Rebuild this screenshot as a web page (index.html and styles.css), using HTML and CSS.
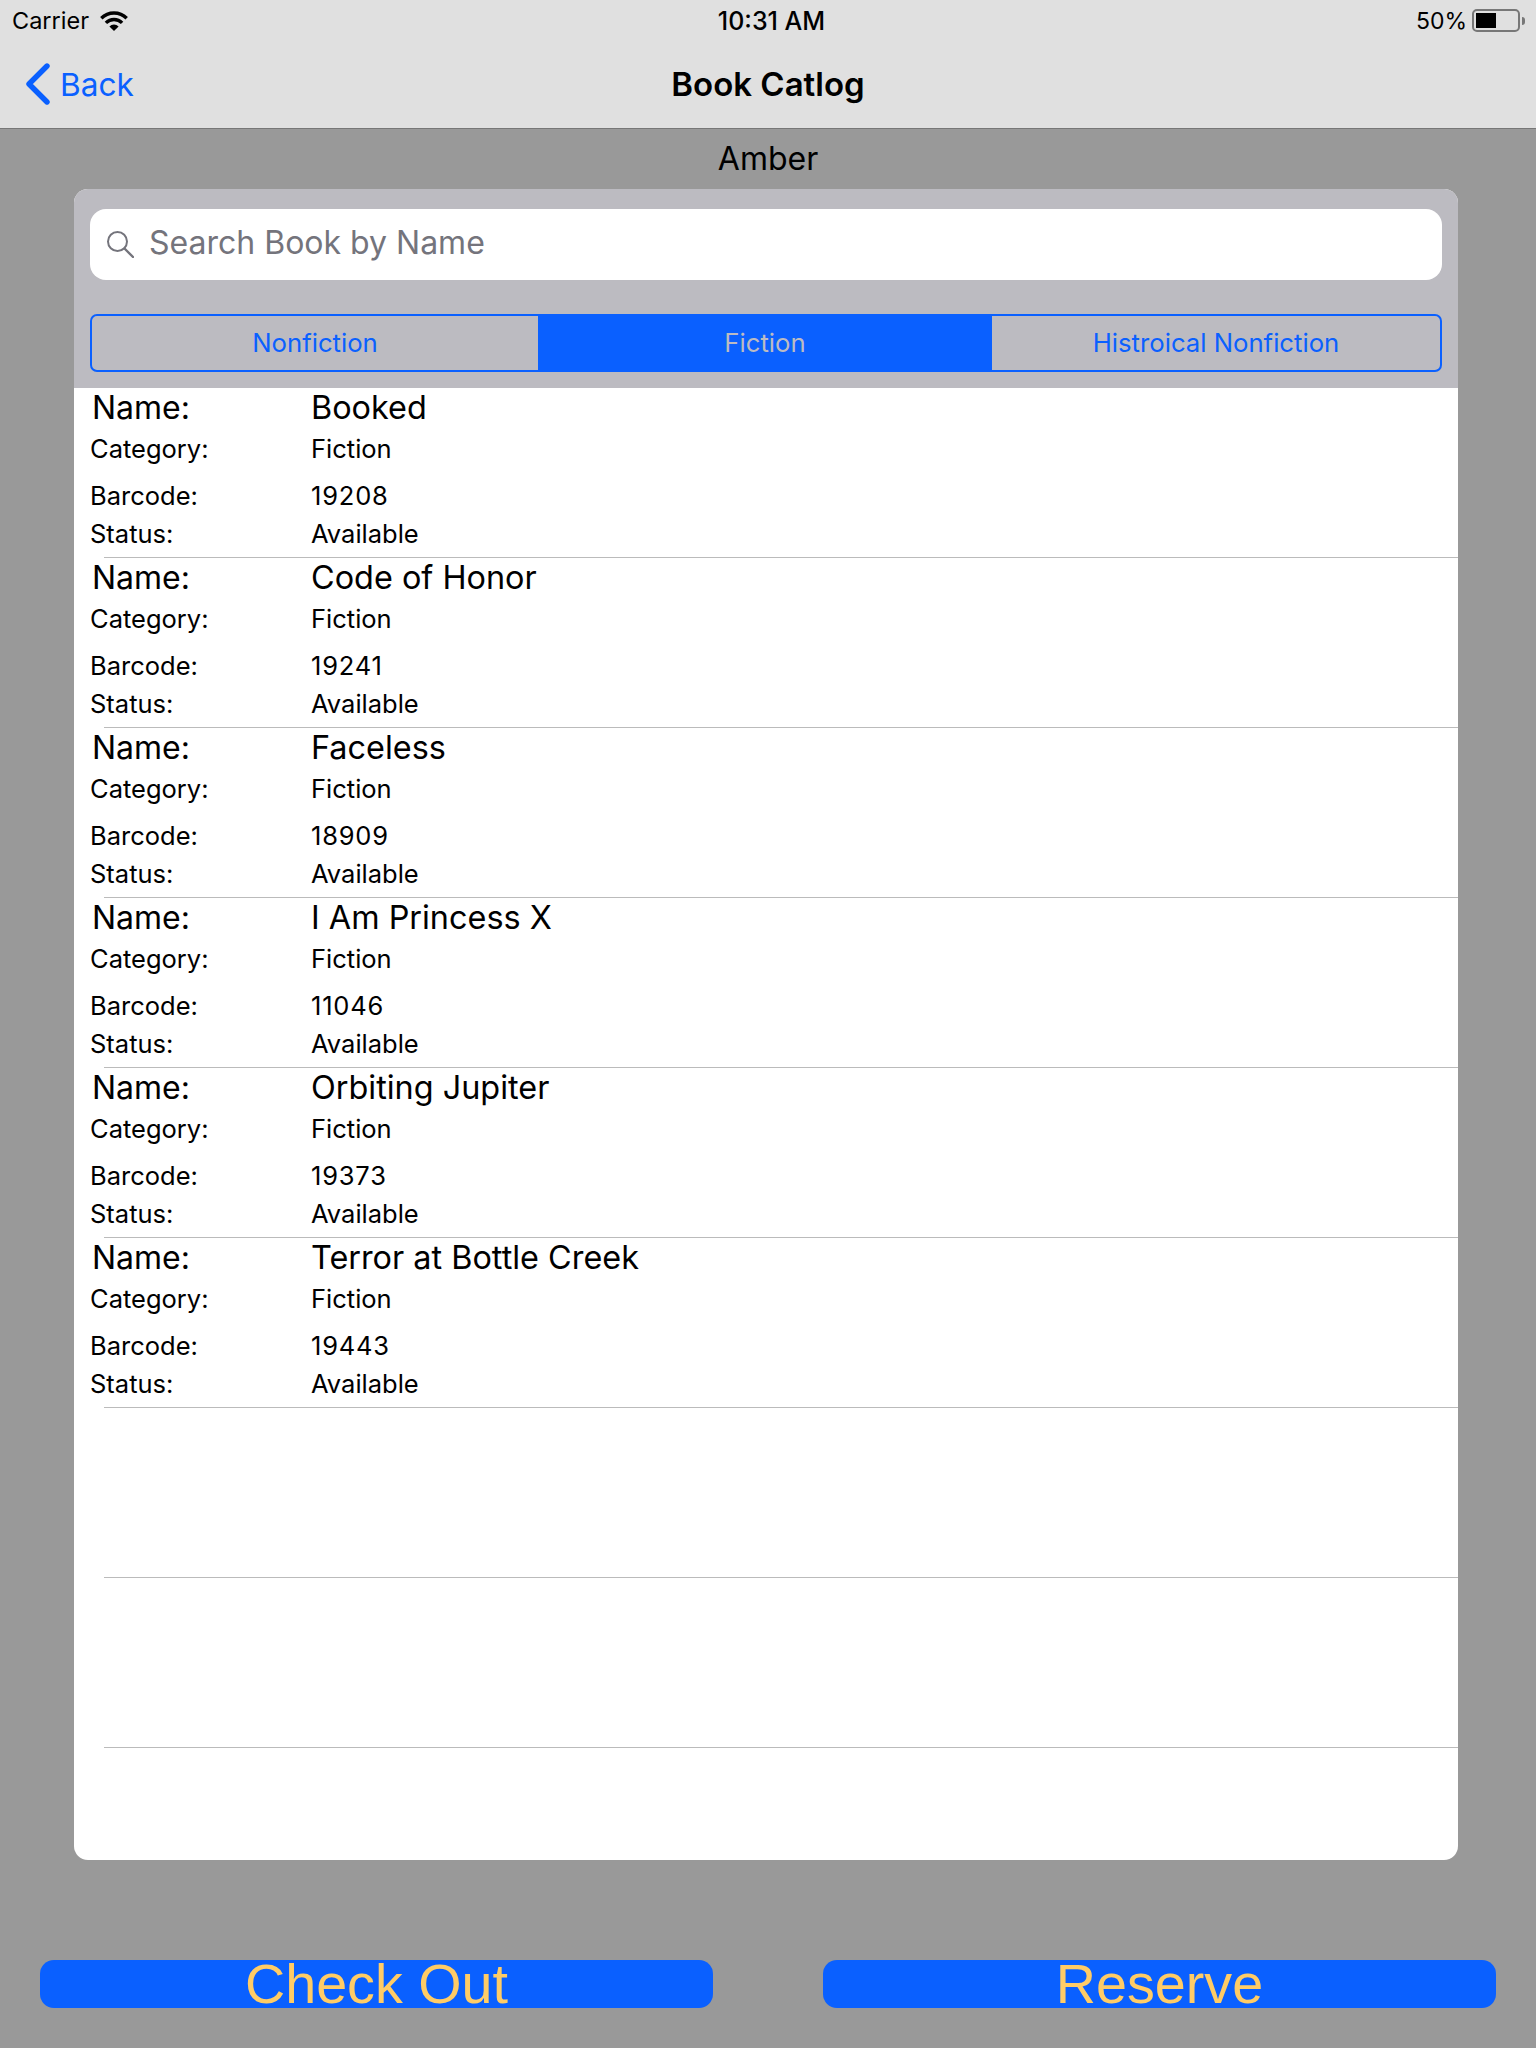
FILE: index.html
```html
<!DOCTYPE html>
<html lang="en">
<head>
    <meta charset="UTF-8">
    <title>Book Catlog</title>
    <link rel="stylesheet" href="styles.css">
</head>
<body>

    <header class="top">
        <div class="status">
            <div class="status-left">
                <span>Carrier</span>
                <svg class="wifi" width="28" height="20" viewBox="0 0 28 20">
                    <path d="M1.3 7.3 A18 18 0 0 1 26.7 7.3" fill="none" stroke="#000" stroke-width="3.4"/>
                    <path d="M5.9 11.9 A11.5 11.5 0 0 1 22.1 11.9" fill="none" stroke="#000" stroke-width="3.4"/>
                    <path d="M14 20 L9.4 15.4 A6.5 6.5 0 0 1 18.6 15.4 Z"/>
                </svg>
            </div>
            <div class="status-time">10:31 AM</div>
            <div class="status-right">
                <span>50%</span>
                <div class="battery"><div class="battery-fill"></div></div>
                <div class="battery-nub"></div>
            </div>
        </div>
        <nav class="nav">
            <a class="back">
                <svg width="24" height="42" viewBox="0 0 24 42">
                    <path d="M21 3 L3 21 L21 39" fill="none" stroke="#0a60ff" stroke-width="5.4" stroke-linecap="round" stroke-linejoin="round"/>
                </svg>
                <span>Back</span>
            </a>
            <div class="nav-title">Book Catlog</div>
        </nav>
    </header>

    <div class="user">Amber</div>

    <section class="panel">
        <div class="panel-head">
            <div class="search">
                <svg class="search-icon" width="28" height="28" viewBox="0 0 28 28">
                    <circle cx="11.5" cy="11.5" r="9.5" fill="none" stroke="#74747c" stroke-width="2"/>
                    <path d="M18.5 18.5 L27 27" stroke="#74747c" stroke-width="2.4" stroke-linecap="round"/>
                </svg>
                <input type="text" placeholder="Search Book by Name">
            </div>
            <div class="tabs">
                <div class="tab">Nonfiction</div>
                <div class="tab active">Fiction</div>
                <div class="tab">Histroical Nonfiction</div>
            </div>
        </div>

        <div class="row">
            <div class="name-label">Name:</div><div class="name-value">Booked</div>
            <div class="label">Category:</div><div class="value">Fiction</div>
            <div class="label">Barcode:</div><div class="value barcode">19208</div>
            <div class="label">Status:</div><div class="value">Available</div>
        </div>
        <div class="sep"></div>
        <div class="row">
            <div class="name-label">Name:</div><div class="name-value">Code of Honor</div>
            <div class="label">Category:</div><div class="value">Fiction</div>
            <div class="label">Barcode:</div><div class="value barcode">19241</div>
            <div class="label">Status:</div><div class="value">Available</div>
        </div>
        <div class="sep"></div>
        <div class="row">
            <div class="name-label">Name:</div><div class="name-value">Faceless</div>
            <div class="label">Category:</div><div class="value">Fiction</div>
            <div class="label">Barcode:</div><div class="value barcode">18909</div>
            <div class="label">Status:</div><div class="value">Available</div>
        </div>
        <div class="sep"></div>
        <div class="row">
            <div class="name-label">Name:</div><div class="name-value">I Am Princess X</div>
            <div class="label">Category:</div><div class="value">Fiction</div>
            <div class="label">Barcode:</div><div class="value barcode">11046</div>
            <div class="label">Status:</div><div class="value">Available</div>
        </div>
        <div class="sep"></div>
        <div class="row">
            <div class="name-label">Name:</div><div class="name-value">Orbiting Jupiter</div>
            <div class="label">Category:</div><div class="value">Fiction</div>
            <div class="label">Barcode:</div><div class="value barcode">19373</div>
            <div class="label">Status:</div><div class="value">Available</div>
        </div>
        <div class="sep"></div>
        <div class="row">
            <div class="name-label">Name:</div><div class="name-value">Terror at Bottle Creek</div>
            <div class="label">Category:</div><div class="value">Fiction</div>
            <div class="label">Barcode:</div><div class="value barcode">19443</div>
            <div class="label">Status:</div><div class="value">Available</div>
        </div>
        <div class="sep"></div>
        <div class="row"></div>
        <div class="sep"></div>
        <div class="row"></div>
        <div class="sep"></div>
    </section>

    <footer class="actions">
        <button class="action">Check Out</button>
        <button class="action">Reserve</button>
    </footer>

</body>
</html>
```

FILE: styles.css
```css
* {
    box-sizing: border-box;
}
body {
    margin: 0;
    height: 2048px;
    overflow: hidden;
    background-color: #999;
    font-family: Inter, "Liberation Sans", sans-serif;
    color: #000;
}

.top {
    height: 129px;
    background-color: #e0e0e0;
    border-bottom: 1px solid #777;
}
.status {
    display: grid;
    grid-template-columns: 1fr 1fr 1fr;
    align-items: center;
    height: 40px;
    padding: 1px 11px 0 12px;
    font-size: 23.5px;
}
.status-left {
    display: flex;
    align-items: center;
    gap: 11px;
}
.status-time {
    padding-left: 6px;
    text-align: center;
    font-size: 25px;
    font-weight: 500;
}
.status-right {
    display: flex;
    align-items: center;
    justify-content: flex-end;
    font-size: 23px;
}
.battery {
    width: 48px;
    height: 23px;
    margin-left: 5px;
    padding: 2px;
    border: 2px solid #777;
    border-radius: 5px;
}
.battery-fill {
    width: 20px;
    height: 100%;
    background-color: #000;
}
.battery-nub {
    width: 3px;
    height: 8px;
    margin-left: 2px;
    background-color: #777;
    border-radius: 0 4px 4px 0;
}

.nav {
    display: grid;
    grid-template-columns: 1fr auto 1fr;
    align-items: center;
    height: 88px;
    padding: 0 26px;
}
.back {
    display: flex;
    align-items: center;
    gap: 10px;
    color: #0a60ff;
    font-size: 31.6px;
}
.nav-title {
    grid-column: 2;
    font-size: 33px;
    font-weight: 600;
}

.user {
    height: 60px;
    text-align: center;
    font-size: 32px;
    line-height: 60px;
}

.panel {
    height: 1671px;
    margin: 0 78px 0 74px;
    background-color: #fff;
    border-radius: 14px;
    overflow: hidden;
}
.panel-head {
    height: 199px;
    padding: 20px 16px 0;
    background-color: #bcbbc1;
}
.search {
    display: flex;
    align-items: center;
    gap: 15px;
    height: 71px;
    padding-left: 16px;
    background-color: #fff;
    border-radius: 16px;
}
.search-icon {
    margin-bottom: 2px;
}
.search input {
    flex: 1;
    border: none;
    outline: none;
    padding: 0 0 5px;
    background: transparent;
    font-family: inherit;
    font-size: 32px;
}
.search input::placeholder {
    color: #74747c;
    opacity: 1;
}
.tabs {
    display: grid;
    grid-template-columns: 446px 454px 1fr;
    height: 58px;
    margin-top: 34px;
    border: 2px solid #0a60ff;
    border-radius: 7px;
    overflow: hidden;
}
.tab {
    display: flex;
    align-items: center;
    justify-content: center;
    padding-bottom: 1px;
    color: #0a60ff;
    font-size: 25.7px;
}
.tab.active {
    background-color: #0a60ff;
    color: #bcbbc1;
}

.row {
    display: grid;
    grid-template-columns: 221px 1fr;
    grid-template-rows: 38px 45px 49px 27px;
    align-content: start;
    align-items: center;
    height: 169px;
    padding-left: 16px;
}
.sep {
    height: 1px;
    margin-left: 30px;
    background-color: #bbb;
}
.name-label {
    padding-left: 2px;
    font-size: 32px;
}
.name-value {
    font-size: 32.4px;
}
.label,
.value {
    font-size: 25.5px;
}
.barcode {
    letter-spacing: 0.8px;
}

.actions {
    display: flex;
    justify-content: space-between;
    padding: 100px 40px 0 40px;
}
.action {
    width: 673px;
    height: 48px;
    padding: 0;
    border: none;
    border-radius: 14px;
    background-color: #0a60ff;
    color: #ffcc66;
    font-family: "Liberation Sans", sans-serif;
    font-size: 55.7px;
    line-height: 48px;
}
```
